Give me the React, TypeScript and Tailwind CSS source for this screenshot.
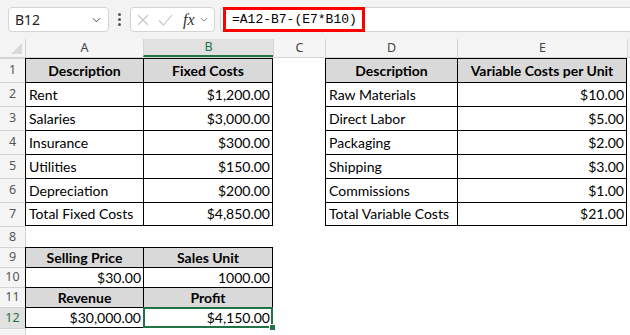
import clsx from 'clsx';

type Kind = 'head' | 'text' | 'num' | 'none';

type CellSpec = {
  v?: string;
  k: Kind;
  box?: boolean; // part of a bordered table block
  r?: boolean; // last column of block
  b?: boolean; // last row of block
  sel?: boolean; // active cell
};

type RowSpec = { n: number; h: string; cells: CellSpec[]; hideNum?: boolean };

const GREEN = '#217346';

const colW = ['w-[118px]', 'w-[130px]', 'w-[52px]', 'w-[132px]', 'w-[170px]'];
const colLetters = ['A', 'B', 'C', 'D', 'E'];

const none: CellSpec = { k: 'none' };
const head = (v: string, r = false): CellSpec => ({ v, k: 'head', box: true, r });
const text = (v: string, b = false): CellSpec => ({ v, k: 'text', box: true, b });
const num = (v: string, b = false): CellSpec => ({ v, k: 'num', box: true, r: true, b });

const rows: RowSpec[] = [
  { n: 1, h: 'h-[24px]', cells: [head('Description'), head('Fixed Costs', true), none, head('Description'), head('Variable Costs per Unit', true)] },
  { n: 2, h: 'h-[24px]', cells: [text('Rent'), num('$1,200.00'), none, text('Raw Materials'), num('$10.00')] },
  { n: 3, h: 'h-[24px]', cells: [text('Salaries'), num('$3,000.00'), none, text('Direct Labor'), num('$5.00')] },
  { n: 4, h: 'h-[24px]', cells: [text('Insurance'), num('$300.00'), none, text('Packaging'), num('$2.00')] },
  { n: 5, h: 'h-[24px]', cells: [text('Utilities'), num('$150.00'), none, text('Shipping'), num('$3.00')] },
  { n: 6, h: 'h-[24px]', cells: [text('Depreciation'), num('$200.00'), none, text('Commissions'), num('$1.00')] },
  { n: 7, h: 'h-[24px]', cells: [text('Total Fixed Costs', true), num('$4,850.00', true), none, text('Total Variable Costs', true), num('$21.00', true)] },
  { n: 8, h: 'h-[21px]', cells: [none, none, none, none, none] },
  { n: 9, h: 'h-[20px]', cells: [head('Selling Price'), head('Sales Unit', true), none, none, none] },
  { n: 10, h: 'h-[20px]', cells: [{ v: '$30.00', k: 'num', box: true }, num('1000.00'), none, none, none] },
  { n: 11, h: 'h-[20px]', cells: [head('Revenue'), head('Profit', true), none, none, none] },
  { n: 12, h: 'h-[21px]', cells: [{ v: '$30,000.00', k: 'num', box: true, b: true }, { ...num('$4,150.00', true), sel: true }, none, none, none] },
  // only the top sliver of row 13 is in view
  { n: 13, h: 'h-[20px]', cells: [none, none, none, none, none], hideNum: true },
];

function Cell({ c, w, first }: { c: CellSpec; w: string; first: boolean }) {
  return (
    <div
      className={clsx(
        'relative flex shrink-0 items-center whitespace-nowrap leading-none text-black',
        w,
        c.k === 'head' && 'justify-center bg-[#d9d9d9] font-bold',
        c.k === 'num' && 'justify-end pr-[2px]',
        c.k === 'text' && 'pl-[3px]',
        c.box && 'border-l border-t border-black',
        c.r && 'border-r',
        c.b && 'border-b',
        !c.box && first && 'border-l border-[#d4d4d4]',
      )}
    >
      {c.v}
      {c.sel && (
        <>
          <div className="pointer-events-none absolute -inset-px border-2" style={{ borderColor: GREEN }} />
          <div className="absolute -bottom-[3px] -right-[3px] h-[5px] w-[5px] bg-[#217346] outline outline-1 outline-white" />
        </>
      )}
    </div>
  );
}

function Row({ r }: { r: RowSpec }) {
  const active = r.n === 12;
  return (
    <div className={clsx('flex', r.h)}>
      <div
        className={clsx(
          'flex w-[25px] shrink-0 items-center justify-center border-t border-[#d4d4d4] font-["Noto_Sans",sans-serif] text-[12.5px] leading-none',
          active ? 'bg-[#e1e1e1] text-[#217346]' : 'bg-[#f5f5f5] text-[#555]',
        )}
      >
        {!r.hideNum && r.n}
      </div>
      {r.cells.map((c, i) => (
        <Cell key={i} c={c} w={colW[i]} first={i === 0} />
      ))}
      <div className="flex-1" />
    </div>
  );
}

function Chevron({ className }: { className: string }) {
  return (
    <svg className={className} viewBox="0 0 10 6" fill="none" stroke="currentColor" strokeWidth="1.1">
      <path d="M1 1l4 4 4-4" />
    </svg>
  );
}

function FormulaBar() {
  return (
    <div className="flex h-[39px] items-start bg-[#f3f3f3] pl-[8px] pt-[7px]">
      {/* name box */}
      <div className="flex h-[25px] w-[101px] items-center justify-between rounded-[4px] border border-[#d4d4d4] bg-white pl-[6px] pr-[7px]">
        <span className='font-["Noto_Sans",sans-serif] text-[14px] text-[#222]'>B12</span>
        <Chevron className="h-[6px] w-[9px] text-[#444]" />
      </div>
      <div className="mx-[9px] flex h-[25px] flex-col items-center justify-center gap-[2px]">
        <span className="h-[3px] w-[3px] rounded-full bg-[#555]" />
        <span className="h-[3px] w-[3px] rounded-full bg-[#555]" />
        <span className="h-[3px] w-[3px] rounded-full bg-[#555]" />
      </div>
      {/* cancel / enter / fx */}
      <div className="flex h-[25px] w-[85px] items-center rounded-[4px] border border-[#d4d4d4] bg-white pl-[6px]">
        <svg className="h-[12px] w-[12px] text-[#c4c4c4]" viewBox="0 0 12 12" fill="none" stroke="currentColor" strokeWidth="1.1">
          <path d="M1 1l10 10M11 1L1 11" />
        </svg>
        <svg className="ml-[9px] h-[12px] w-[15px] text-[#c4c4c4]" viewBox="0 0 15 12" fill="none" stroke="currentColor" strokeWidth="1.1">
          <path d="M1 6.5l4.5 4.5L14 1" />
        </svg>
        <span className='ml-[10px] font-["Liberation_Serif",serif] text-[16px] italic leading-none text-[#333]'>fx</span>
        <Chevron className="ml-[5px] h-[5px] w-[8px] text-[#777]" />
      </div>
      {/* formula input */}
      <div className="ml-[5px] flex h-[25px] flex-1 items-stretch rounded-l-[4px] border-y border-l border-[#d4d4d4] bg-white pl-[2px]">
        <div className="-my-px flex w-[142px] items-center border-[3px] border-[#ff0000] pl-[6px]">
          <span className='font-["Liberation_Mono",monospace] text-[13px] leading-none text-black'>=A12-B7-(E7*B10)</span>
        </div>
      </div>
    </div>
  );
}

function ColumnHeader() {
  return (
    <div className='flex h-[19px] border-b border-[#d4d4d4] bg-[#f5f5f5] font-["Noto_Sans",sans-serif] text-[12.5px] leading-none text-[#444]'>
      <div className="relative w-[25px] shrink-0">
        <svg className="absolute bottom-[3px] right-[3px] h-[11px] w-[11px]" viewBox="0 0 11 11">
          <path d="M11 0V11H0Z" fill="#dadada" />
        </svg>
      </div>
      {colLetters.map((l, i) => (
        <div
          key={l}
          className={clsx(
            'flex shrink-0 items-center justify-center border-l border-[#d4d4d4]',
            colW[i],
            l === 'B' && 'border-b-2 border-b-[#217346] bg-[#e1e1e1] text-[#217346]',
          )}
        >
          {l}
        </div>
      ))}
      <div className="flex-1 border-l border-[#d4d4d4]" />
    </div>
  );
}

export default function App() {
  return (
    <div className="h-[335px] w-[630px] overflow-hidden bg-white">
      <FormulaBar />
      <ColumnHeader />
      <div className='font-["Lato",sans-serif] text-[14px]'>
        {rows.map((r) => (
          <Row key={r.n} r={r} />
        ))}
      </div>
    </div>
  );
}
